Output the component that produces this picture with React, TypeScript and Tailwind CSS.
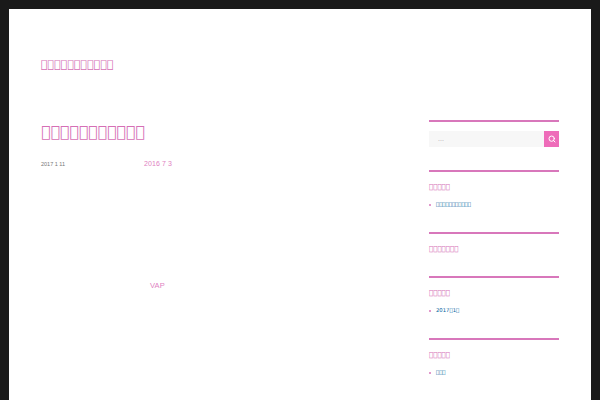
import React from "react";
import { FiSearch } from "react-icons/fi";

// characters with no glyph in any font: the page shows them as empty boxes
const tofu = (n: number) => "\uE000".repeat(n);

const Widget = ({ title, item }: { title: string; item?: string }) => (
  <section className="border-t-2 border-[#d877bb] pt-[9px] pb-[21px] last:pb-0">
    <h2 className="font-['DejaVu_Sans',sans-serif] text-[7px] leading-[12px] text-[#d56fb5]">{title}</h2>
    {item && (
      <ul className="mt-[5px] flex items-center gap-[5px] font-['DejaVu_Sans',sans-serif] text-[5.3px] leading-[13px] text-[#00629e]">
        <li className="h-[2px] w-[2px] rounded-full bg-[#d877bb]" />
        <li>{item}</li>
      </ul>
    )}
  </section>
);

export default function App() {
  return (
    <div className="h-[400px] w-[600px] overflow-hidden bg-[#1a1a1a] p-[9px] pb-0 font-['Liberation_Sans',sans-serif]">
      <div className="h-full bg-white px-[32px]">
        <header className="pt-[48px]">
          <h1 className="font-['DejaVu_Sans',sans-serif] text-[11px] leading-[16px] text-[#d56fb5]">{tofu(11)}</h1>
        </header>
        <div className="mt-[40px] flex justify-between">
          <main className="w-[340px] pt-[7px]">
            <h2 className="font-['DejaVu_Sans',sans-serif] text-[15.7px] leading-[24px] text-[#d56fb5]">{tofu(11)}</h2>
            <div className="mt-[15px] flex items-baseline">
              <span className="w-[103px] text-[5.5px] text-[#777]">2017 1 11</span>
              <span className="text-[7px] tracking-[0.1px] text-[#e07fc2]">2016 7 3</span>
            </div>
            <p className="mt-[110px] pl-[109px] text-[7.5px] tracking-[0.1px] text-[#e07fc2]">VAP</p>
          </main>
          <aside className="w-[130px] pt-[7px]">
            <section className="border-t-2 border-[#d877bb] pt-[9px] pb-[23px]">
              <div className="flex h-[16px]">
                <div className="flex-1 bg-[#f7f7f7] pl-[9px] text-[7px] leading-[16px] text-[#aaa]">...</div>
                <button className="flex w-[15px] items-center justify-center bg-[#ee6cb9] text-white">
                  <FiSearch className="h-[8px] w-[8px]" strokeWidth={3} />
                </button>
              </div>
            </section>
            <Widget title={tofu(5)} item={tofu(11)} />
            <Widget title={tofu(7)} />
            <Widget title={tofu(5)} item={"2017" + tofu(1) + "1" + tofu(1)} />
            <Widget title={tofu(5)} item={tofu(3)} />
          </aside>
        </div>
      </div>
    </div>
  );
}
